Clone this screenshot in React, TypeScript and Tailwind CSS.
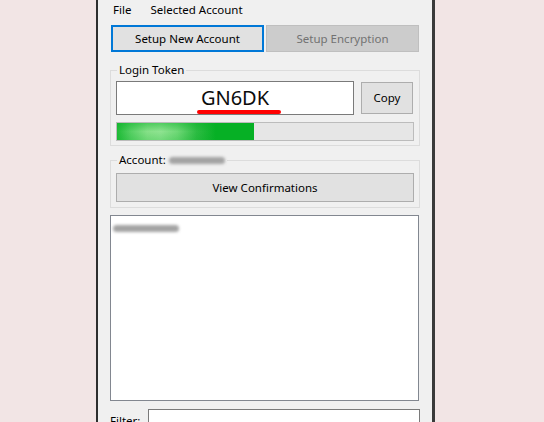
import React from 'react';

const FONT = { fontFamily: '"Noto Sans", "Open Sans", sans-serif' };

// smudged placeholder for the redacted account name
function Blurred({ w }: { w: number }) {
  return (
    <span className="inline-block h-[7px] rounded-full bg-[#a3a3a3] blur-[1.5px] align-middle" style={{ width: w }} />
  );
}

export default function App() {
  return (
    <div className="flex h-[422px] w-[544px] overflow-hidden bg-[#f2e5e5] text-[11px] text-black" style={FONT}>
      <div className="ml-[96px] flex h-full w-[339px] shrink-0 flex-col overflow-hidden border-l-2 border-r-[3px] border-l-[#2e2e2e] border-r-[#3a3a3a] bg-[#f0f0f0] px-3">
        {/* menu */}
        <div className="flex h-[25px] shrink-0 items-start gap-[19px] pl-[3px] pt-[2px] text-[11.5px] leading-[16px]">
          <span>File</span>
          <span>Selected Account</span>
        </div>

        {/* top buttons */}
        <div className="flex shrink-0 gap-[2px] pl-[1px]">
          <button className="h-[27px] w-[153px] border-2 border-[#0078d7] bg-[#e1e1e1] text-[11.5px] leading-none">
            Setup New Account
          </button>
          <button className="h-[27px] w-[153px] border border-[#bfbfbf] bg-[#cccccc] text-[11.5px] leading-none text-[#727272]">
            Setup Encryption
          </button>
        </div>

        {/* login token group */}
        <div className="relative mt-[18px] h-[76px] shrink-0 border border-[#dcdcdc] px-[5px] pt-[10px]">
          <span className="absolute left-[6px] top-[-9px] bg-[#f0f0f0] px-[2px] text-[11.5px] leading-[16px]">Login Token</span>
          <div className="flex items-center gap-[7px]">
            <div className="relative flex h-[34px] w-[238px] items-center justify-center border border-[#7a7a7a] bg-white">
              <span className="text-[20px] leading-none text-[#0c0c0c]">GN6DK</span>
              <div className="absolute left-[80px] top-[28px] h-[4px] w-[84px] rounded-full bg-[#ff0000]" />
            </div>
            <button className="h-[32px] w-[52px] border border-[#adadad] bg-[#e1e1e1] text-[11.5px] leading-none">Copy</button>
          </div>
          <div className="mt-[7px] h-[19px] w-[298px] border border-[#bcbcbc] bg-[#e6e6e6]">
            <div
              className="relative h-full w-[137px] overflow-hidden"
              style={{
                background:
                  'linear-gradient(90deg, #1fbb37 0%, #55cf63 10%, #86e088 22%, #8fe391 32%, #6fd877 44%, #2dbc43 58%, #06b025 72%, #06b025 100%)',
              }}
            >
              <div className="absolute inset-0 bg-gradient-to-b from-[#06b025]/45 via-transparent to-[#06b025]/20" />
            </div>
          </div>
        </div>

        {/* account group */}
        <div className="relative mt-[14px] h-[48px] shrink-0 border border-[#dcdcdc] px-[5px] pt-[12px]">
          <span className="absolute left-[6px] top-[-9px] flex items-center gap-[3px] bg-[#f0f0f0] px-[2px] text-[11.5px] leading-[16px]">
            Account: <Blurred w={56} />
          </span>
          <button className="h-[29px] w-full border border-[#adadad] bg-[#e1e1e1] text-[11.5px] leading-none">View Confirmations</button>
        </div>

        {/* list */}
        <div className="mt-[7px] h-[186px] w-[309px] shrink-0 border border-[#828790] bg-white px-[2px] pt-[3px]">
          <Blurred w={66} />
        </div>

        {/* filter */}
        <div className="mt-[8px] flex shrink-0 items-start gap-[8px]">
          <span className="pt-[4px] text-[11.5px] leading-[16px]">Filter:</span>
          <div className="h-[23px] flex-1 border border-[#7a7a7a] bg-white" />
        </div>
      </div>
    </div>
  );
}
